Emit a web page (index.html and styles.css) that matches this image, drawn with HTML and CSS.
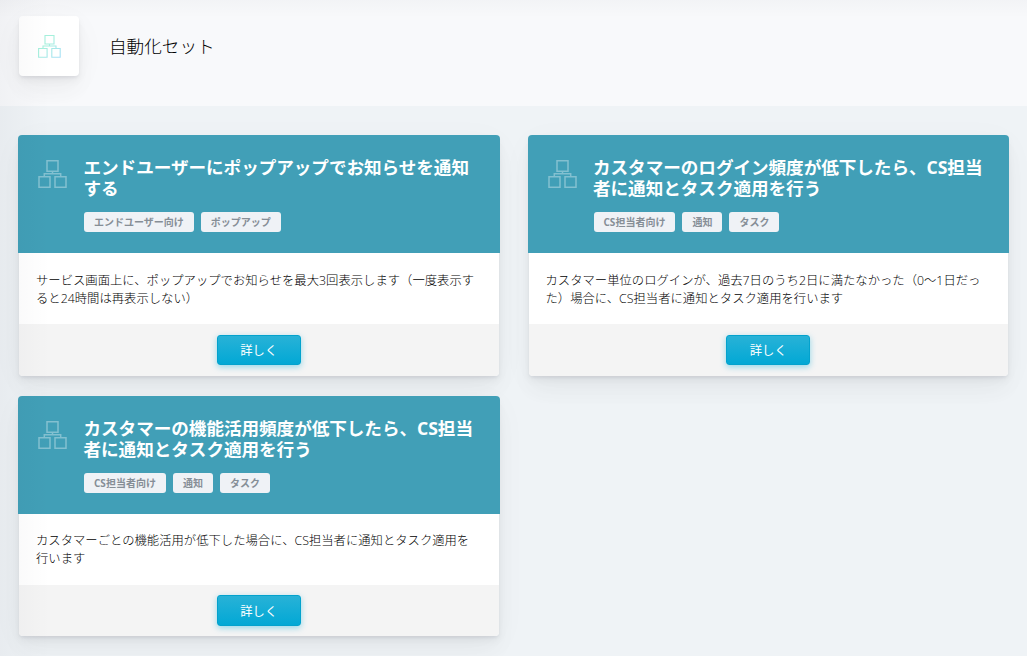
FILE: index.html
```html
<!DOCTYPE html>
<html lang="ja">
<head>
    <meta charset="UTF-8">
    <meta name="viewport" content="width=device-width, initial-scale=1.0">
    <title>自動化セット</title>
    <link rel="stylesheet" href="styles.css">
</head>
<body>
    <svg width="0" height="0" class="defs">
        <linearGradient id="iconGradient" x1="0" y1="0" x2="1" y2="1">
            <stop offset="0.4" stop-color="#a5f0dc"/>
            <stop offset="1" stop-color="#a8dff7"/>
        </linearGradient>
        <symbol id="network" viewBox="0 0 29 28">
            <path d="M9 .7h11v10.600H9zM1 16.700h11v10.600H1zM17 16.700h11v10.600H17zM14.500 11.500v2.200M6.300 16v-2.300h16.400V16" fill="none" stroke-width="1.500"/>
        </symbol>
    </svg>

    <header class="page-title">
        <div class="page-title-icon">
            <svg width="23" height="23" viewBox="0 0 23 23"><path d="M7 .5h9v8.500H7zM.6 13.500h8.500v8.700H.6zM13.800 13.500h8.400v8.700h-8.400zM11.500 9v2M5 13.500v-2.500h13v2.500" fill="none" stroke="url(#iconGradient)" stroke-width="1.100"/></svg>
        </div>
        <h1>自動化セット</h1>
    </header>

    <main class="card-list">
        <section class="card">
            <div class="card-header">
                <svg class="card-icon"><use href="#network"/></svg>
                <div>
                    <h2>エンドユーザーにポップアップでお知らせを通知<br>する</h2>
                    <div class="tags">
                        <span class="tag">エンドユーザー向け</span>
                        <span class="tag">ポップアップ</span>
                    </div>
                </div>
            </div>
            <p class="card-body">サービス画面上に、ポップアップでお知らせを最大3回表示します（一度表示す<br>ると24時間は再表示しない）</p>
            <div class="card-footer"><button type="button">詳しく</button></div>
        </section>

        <section class="card">
            <div class="card-header">
                <svg class="card-icon"><use href="#network"/></svg>
                <div>
                    <h2>カスタマーのログイン頻度が低下したら、CS担当<br>者に通知とタスク適用を行う</h2>
                    <div class="tags">
                        <span class="tag">CS担当者向け</span>
                        <span class="tag">通知</span>
                        <span class="tag">タスク</span>
                    </div>
                </div>
            </div>
            <p class="card-body">カスタマー単位のログインが、過去7日のうち2日に満たなかった（0～1日だっ<br>た）場合に、CS担当者に通知とタスク適用を行います</p>
            <div class="card-footer"><button type="button">詳しく</button></div>
        </section>

        <section class="card">
            <div class="card-header">
                <svg class="card-icon"><use href="#network"/></svg>
                <div>
                    <h2>カスタマーの機能活用頻度が低下したら、CS担当<br>者に通知とタスク適用を行う</h2>
                    <div class="tags">
                        <span class="tag">CS担当者向け</span>
                        <span class="tag">通知</span>
                        <span class="tag">タスク</span>
                    </div>
                </div>
            </div>
            <p class="card-body">カスタマーごとの機能活用が低下した場合に、CS担当者に通知とタスク適用を<br>行います</p>
            <div class="card-footer"><button type="button">詳しく</button></div>
        </section>
    </main>
    <div class="edge-shadow"></div>
</body>
</html>
```

FILE: styles.css
```css
* { box-sizing: border-box; }
body {
    margin: 0;
    height: 656px;
    overflow: hidden;
    background: #eff3f6;
    color: #000;
    font-family: "Open Sans", "Noto Sans CJK JP", sans-serif;
    font-size: 12.32px;
}
h1, h2, p { margin: 0; white-space: nowrap; }
.defs { display: block; }

.page-title {
    display: flex;
    align-items: flex-start;
    height: 106px;
    padding: 16px 19px;
    background: #f8f9fb;
}
.page-title-icon {
    display: flex;
    align-items: center;
    justify-content: center;
    width: 60px;
    height: 60px;
    margin-right: 30px;
    background: #fff;
    border-radius: 4px;
    box-shadow: 0 7px 35px rgba(8, 10, 37, .03), 0 15px 22px rgba(8, 10, 37, .03), 0 4px 9px rgba(8, 10, 37, .05), 0 2px 3px rgba(8, 10, 37, .05);
}
.page-title h1 { font-size: 17.6px; font-weight: 300; line-height: 60px; }

.card-list {
    display: grid;
    grid-template-columns: 1fr 1fr;
    gap: 20px 30px;
    padding: 29px 19px;
}
.card {
    background: #fff;
    border-radius: 4px;
    box-shadow: 0 7px 35px rgba(8, 10, 37, .03), 0 15px 22px rgba(8, 10, 37, .03), 0 4px 9px rgba(8, 10, 37, .05), 0 2px 3px rgba(8, 10, 37, .05);
}
.card-header {
    display: flex;
    height: 118px;
    margin: 0 -1px;
    padding: 22px 20px 0;
    background: #419fb7;
    border-radius: 4px 4px 0 0;
    color: #fff;
}
.card-icon {
    flex: none;
    width: 29px;
    height: 28px;
    margin: 3px 17px 0 0;
    stroke: rgba(255, 255, 255, .35);
}
.card-header h2 {
    margin-left: -.5px;
    font-size: 17.6px;
    font-weight: 700;
    letter-spacing: -.04px;
    line-height: 21px;
}
.tags { display: flex; gap: 7px; margin-top: 13px; }
.tag {
    height: 20px;
    padding: 0 10px;
    background: #eff2f6;
    border-radius: 3px;
    color: #868e96;
    font-size: 10px;
    font-weight: 700;
    line-height: 20px;
}
.card-body {
    height: 71px;
    padding: 18.600px 17px 0;
    font-weight: 300;
    letter-spacing: .02px;
    line-height: 18px;
}
.card-footer {
    display: flex;
    justify-content: center;
    height: 51.600px;
    padding-top: 10.700px;
    background: #f4f4f4;
    border-radius: 0 0 4px 4px;
}
.card-footer button {
    width: 84px;
    height: 30.500px;
    padding: 0;
    background: linear-gradient(#28b2d7, #02a8d5);
    border: 1px solid #03a2cd;
    border-radius: 3px;
    box-shadow: 0 2px 6px rgba(3, 169, 214, .4);
    color: #fff;
    font: inherit;
}

/* shade cast by the side menu and the top bar */
.edge-shadow {
    position: absolute;
    inset: 0;
    background:
        linear-gradient(90deg, rgba(8, 10, 37, .03), transparent 50px),
        linear-gradient(rgba(8, 10, 37, .025), transparent 18px);
    pointer-events: none;
}
```
